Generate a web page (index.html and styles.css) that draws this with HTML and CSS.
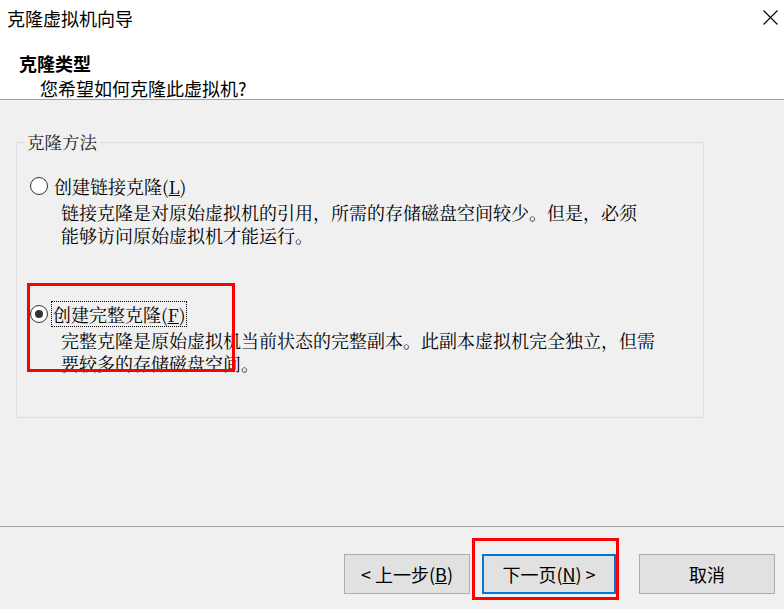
FILE: index.html
```html
<!DOCTYPE html>
<html lang="zh-CN">
<head>
    <meta charset="UTF-8">
    <title>克隆虚拟机向导</title>
    <link rel="stylesheet" href="styles.css">
</head>
<body>
    <header class="top">
        <div class="titlebar">
            <span class="title">克隆虚拟机向导</span>
            <svg class="close" width="15" height="15" viewBox="0 0 15 15">
                <path d="M0.5 0.5 L14.5 14.5 M14.5 0.5 L0.5 14.5" stroke="#000" stroke-width="1.1" fill="none"/>
            </svg>
        </div>
        <h1 class="step-title">克隆类型</h1>
        <p class="step-sub">您希望如何克隆此虚拟机?</p>
    </header>

    <main class="content">
        <fieldset class="group">
            <legend>克隆方法</legend>

            <div class="option first">
                <div class="option-row">
                    <span class="radio"></span>
                    <span class="option-label">创建链接克隆(<u>L</u>)</span>
                </div>
                <p class="option-desc">链接克隆是对原始虚拟机的引用，所需的存储磁盘空间较少。但是，必须<br>能够访问原始虚拟机才能运行。</p>
            </div>

            <div class="option second">
                <div class="option-row">
                    <span class="radio checked"></span>
                    <span class="option-label focus">创建完整克隆(<u>F</u>)</span>
                </div>
                <p class="option-desc">完整克隆是原始虚拟机当前状态的完整副本。此副本虚拟机完全独立，但需<br>要较多的存储磁盘空间。</p>
            </div>
        </fieldset>
    </main>

    <footer class="bottom">
        <button class="btn back">&lt; 上一步(<u>B</u>)</button>
        <button class="btn next">下一页(<u>N</u>) &gt;</button>
        <button class="btn cancel">取消</button>
    </footer>

    <div class="mark mark-option"></div>
    <div class="mark mark-next"></div>
</body>
</html>
```

FILE: styles.css
```css
body {
    margin: 0;
    width: 784px;
    height: 609px;
    overflow: hidden;
    position: relative;
    background-color: #f0f0f0;
    font-family: "Noto Sans CJK SC", "Liberation Sans", sans-serif;
    font-size: 18px;
    color: #000;
}

.top {
    background-color: #fff;
    height: 99px;
    border-bottom: 1px solid #a0a0a0;
}

.titlebar {
    height: 36px;
    display: flex;
    align-items: center;
    justify-content: space-between;
    padding: 0 6px 0 7px;
}

.title {
    line-height: 36px;
}

.close {
    margin-top: -1px;
}

.step-title {
    margin: 15px 0 0 19px;
    font-size: 18px;
    font-weight: bold;
    line-height: 24px;
}

.step-sub {
    margin: 2px 0 0 40px;
    line-height: 22px;
}

.content {
    height: 426px;
    padding-top: 31px;
    box-sizing: border-box;
}

.group {
    margin: 0 0 0 16px;
    width: 688px;
    height: 287px;
    box-sizing: border-box;
    border: 1px solid #dcdcdc;
    padding: 0;
}

.group legend {
    margin-left: 7px;
    padding: 0 3px;
    line-height: 22px;
    font-size: 17.5px;
    font-family: "Noto Serif CJK SC", "Noto Sans CJK SC", serif;
    color: #222;
}

.option-row {
    display: flex;
    align-items: center;
    margin-left: 13px;
}

.first {
    margin-top: 21px;
}

.second {
    margin-top: 55px;
}

.radio {
    width: 18px;
    height: 18px;
    box-sizing: border-box;
    border: 1px solid #333;
    border-radius: 50%;
    background-color: #fff;
    display: flex;
    align-items: center;
    justify-content: center;
}

.radio.checked::after {
    content: "";
    width: 8px;
    height: 8px;
    border-radius: 50%;
    background-color: #333;
}

.option-label {
    margin-left: 6px;
    line-height: 24px;
    font-family: "Noto Serif CJK SC", "Noto Sans CJK SC", serif;
}

.option-label.focus {
    margin-left: 4px;
    padding: 0 1px;
    outline: 1px dotted #000;
}

.option-desc {
    margin: 3px 0 0 44px;
    line-height: 23px;
    font-family: "Noto Serif CJK SC", "Noto Sans CJK SC", serif;
    letter-spacing: 0;
}

.bottom {
    border-top: 1px solid #a0a0a0;
    padding: 27px 9px 0 0;
    display: flex;
    justify-content: flex-end;
}

.btn {
    height: 40px;
    box-sizing: border-box;
    background-color: #e1e1e1;
    border: 1px solid #adadad;
    font-family: "Noto Sans CJK SC", "Liberation Sans", sans-serif;
    font-size: 18px;
    color: #000;
    padding: 0;
}

.back {
    width: 126px;
}

.next {
    width: 134px;
    margin-left: 12px;
    border: 2px solid #0078d7;
}

.cancel {
    width: 136px;
    margin-left: 23px;
}

.mark {
    position: absolute;
    border: 3px solid #ff0000;
    box-sizing: border-box;
}

.mark-option {
    left: 27px;
    top: 283px;
    width: 208px;
    height: 89px;
}

.mark-next {
    left: 472px;
    top: 538px;
    width: 147px;
    height: 62px;
}
```
